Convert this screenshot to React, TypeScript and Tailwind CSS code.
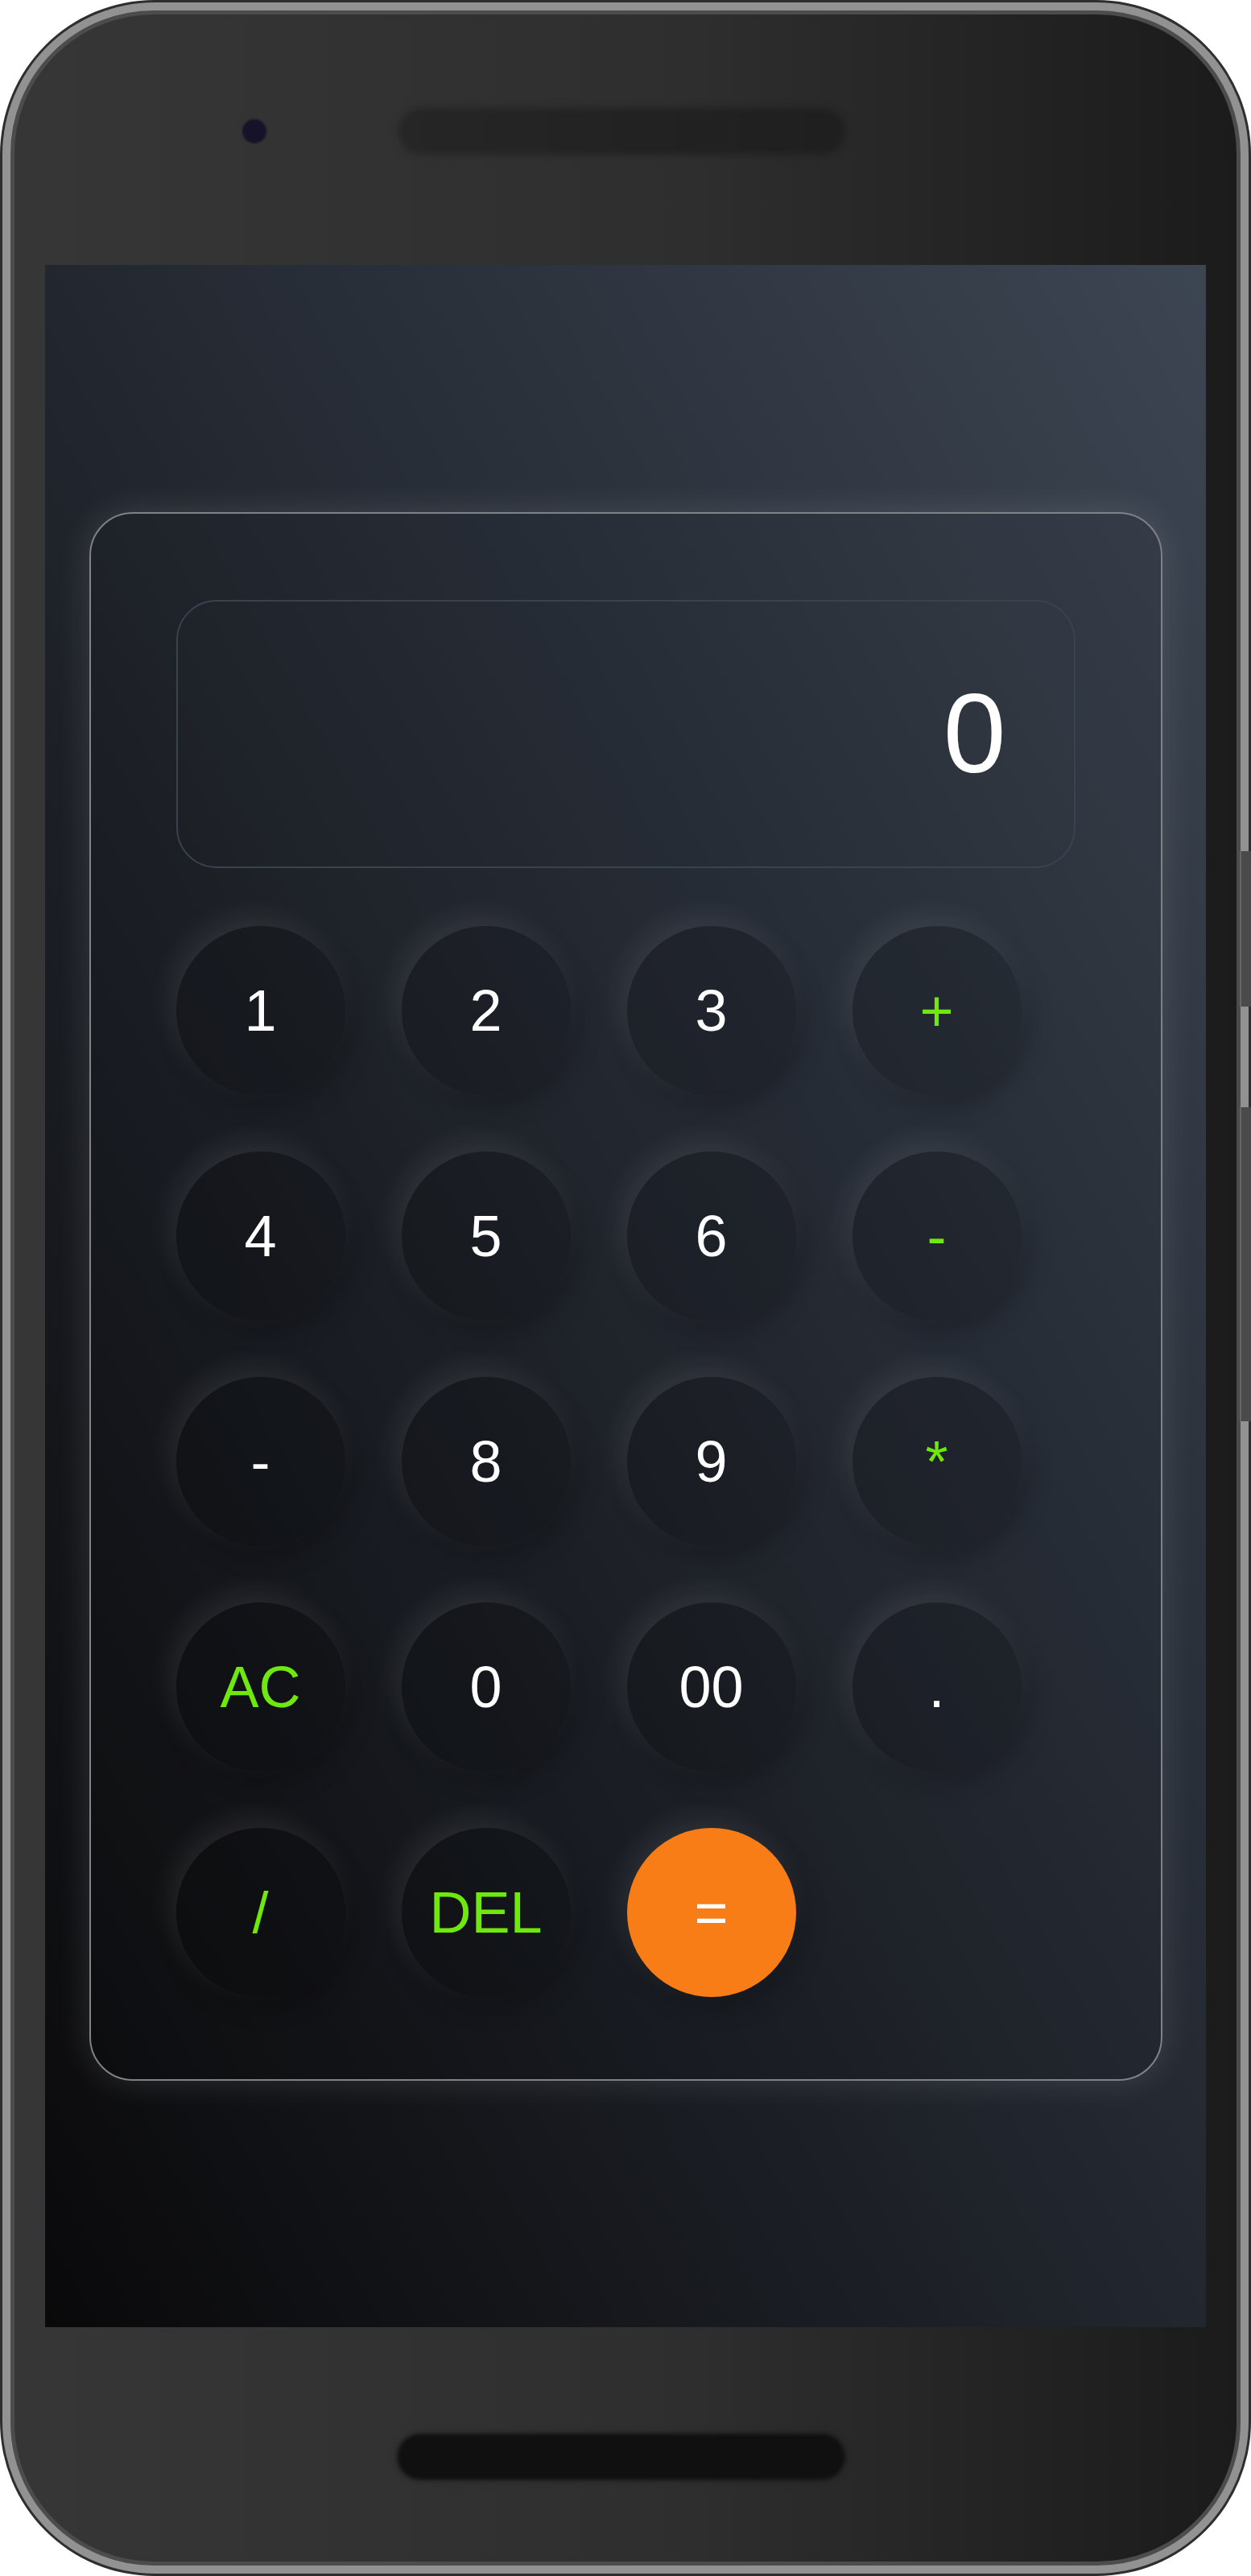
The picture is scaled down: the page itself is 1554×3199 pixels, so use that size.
import React from "react";

type Key = { label: string; tone?: "op" | "eq" };

const keys: Key[] = [
  { label: "1" },
  { label: "2" },
  { label: "3" },
  { label: "+", tone: "op" },
  { label: "4" },
  { label: "5" },
  { label: "6" },
  { label: "-", tone: "op" },
  { label: "-" },
  { label: "8" },
  { label: "9" },
  { label: "*", tone: "op" },
  { label: "AC", tone: "op" },
  { label: "0" },
  { label: "00" },
  { label: "." },
  { label: "/", tone: "op" },
  { label: "DEL", tone: "op" },
  { label: "=", tone: "eq" },
];

function CalcKey({ k }: { k: Key }) {
  const base =
    "flex h-[210px] w-[210px] items-center justify-center rounded-full text-[72px] leading-none shadow-[-8px_-12px_34px_rgba(255,255,255,0.09),8px_12px_30px_rgba(0,0,0,0.25)]";
  if (k.tone === "eq") {
    return <button className={`${base} bg-[#f97d17] text-white`}>{k.label}</button>;
  }
  return (
    <button
      className={`${base} bg-black/15 ${k.tone === "op" ? "text-[#6fe80d]" : "text-white"}`}
    >
      {k.label}
    </button>
  );
}

export default function App() {
  return (
    <div className="h-[3199px] w-[1554px] bg-white font-['Liberation_Sans',Arial,sans-serif]">
      {/* device outer ring */}
      <div className="relative h-full w-full rounded-[192px] bg-[#2e2e2e] p-[3px]">
        <div className="h-full w-full rounded-[189px] bg-[#929292] p-[10px]">
          <div className="flex h-full w-full flex-col rounded-[178px] border-[5px] border-[#4c4c4c] bg-linear-to-r from-[#363636] via-[#2e2e2e] via-55% to-[#1b1b1b] px-[38px]">
            {/* top bezel */}
            <div className="flex h-[311px] shrink-0 items-center pb-[22px] pl-[245px]">
              <div className="h-[30px] w-[30px] rounded-full bg-[#15122a] blur-[1px]" />
              <div className="ml-[164px] h-[58px] w-[555px] rounded-full bg-linear-to-r from-[#262626] to-[#1f1f1f] blur-[4px]" />
            </div>

            {/* screen */}
            <div className="flex h-[2561px] shrink-0 items-center justify-center bg-linear-to-tr from-[#09090a] via-[#22272f] to-[#3c4552]">
              <div className="w-[1333px] rounded-[54px] border-2 border-[#7f8287] bg-black/5 px-[106px] pb-[102px] pt-[107px] shadow-[0_0_44px_rgba(255,255,255,0.13)]">
                <div className="flex h-[333px] items-center justify-end rounded-[50px] border-2 border-[#39424f] pr-[84px]">
                  <span className="text-[140px] leading-none text-white">0</span>
                </div>
                <div className="mt-[72px] grid grid-cols-[repeat(4,210px)] gap-[70px]">
                  {keys.map((k, i) => (
                    <CalcKey key={i} k={k} />
                  ))}
                </div>
              </div>
            </div>

            {/* bottom bezel */}
            <div className="flex flex-1 justify-center pr-[12px] pt-[133px]">
              <div className="h-[56px] w-[555px] rounded-full bg-[#101010] shadow-[0_0_6px_rgba(0,0,0,0.6)] blur-[2px]" />
            </div>
          </div>
        </div>

        {/* side keys */}
        <div className="absolute right-0 top-[1057px] h-[193px] w-[14px] border-l-2 border-[#666] bg-[#4a4a4a]" />
        <div className="absolute right-0 top-[1375px] h-[390px] w-[14px] border-l-2 border-[#666] bg-[#4a4a4a]" />
      </div>
    </div>
  );
}
